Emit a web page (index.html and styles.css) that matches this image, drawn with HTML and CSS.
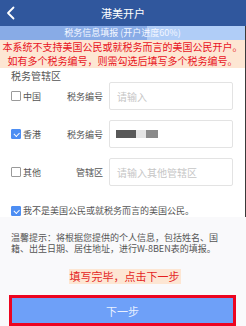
FILE: index.html
```html
<!DOCTYPE html>
<html lang="zh">
<head>
<meta charset="utf-8">
<link rel="stylesheet" href="styles.css">
</head>
<body>
<header class="topbar">
  <svg class="back" width="10" height="14" viewBox="0 0 10 14"><polyline points="7.5,1.5 2,7 7.5,12.5" fill="none" stroke="#fff" stroke-width="1.8" stroke-linecap="round" stroke-linejoin="round"/></svg>
  <h1 class="title">港美开户</h1>
</header>
<div class="edge">
  <div class="progress">
    <div class="progress-fill" style="width:60%"></div>
    <span class="progress-text">税务信息填报 (开户进度60%)</span>
  </div>
  <div class="warning">
    <div class="warn-line">本系统不支持美国公民或就税务而言的美国公民开户。</div>
    <div class="warn-line">如有多个税务编号，则需勾选后填写多个税务编号。</div>
  </div>
  <section class="form">
    <div class="section-title">税务管辖区</div>
    <div class="rows">
      <div class="row">
        <label class="opt"><span class="cb"></span>中国</label>
        <span class="lbl">税务编号</span>
        <div class="input"><span class="ph">请输入</span></div>
      </div>
      <div class="row">
        <label class="opt"><span class="cb checked"></span>香港</label>
        <span class="lbl">税务编号</span>
        <div class="input"><span class="masked"><i class="m1"></i><i class="m2"></i><i class="m3"></i></span></div>
      </div>
      <div class="row">
        <label class="opt"><span class="cb"></span>其他</label>
        <span class="lbl">管辖区</span>
        <div class="input"><span class="ph">请输入其他管辖区</span></div>
      </div>
    </div>
    <label class="agree"><span class="cb checked"></span>我不是美国公民或就税务而言的美国公民。</label>
  </section>
</div>
<section class="bottom">
  <p class="tip">温馨提示：将根据您提供的个人信息，包括姓名、国籍、出生日期、居住地址，进行W-8BEN表的填报。</p>
  <div class="hint-wrap"><span class="hint">填写完毕，点击下一步</span></div>
  <button class="next">下一步</button>
</section>
</body>
</html>
```
FILE: styles.css
```css
* { box-sizing: border-box; }
html, body { margin: 0; padding: 0; }
body {
  width: 246px;
  height: 326px;
  overflow: hidden;
  background: #fff;
  font-family: "Noto Sans CJK SC", "Noto Sans", sans-serif;
  color: #555;
}
.topbar {
  height: 26px;
  background: #30579d;
  display: flex;
  align-items: center;
  justify-content: center;
  position: relative;
}
.back { position: absolute; left: 6px; top: 6px; }
.title {
  margin: 0;
  font-size: 11px;
  font-weight: 400;
  color: #fff;
  line-height: 26px;
}
.edge { border-right: 1px solid #3a3a3a; }
.progress {
  position: relative;
  height: 14px;
  background: #b0cdf7;
  display: flex;
  justify-content: center;
  align-items: center;
}
.progress-fill {
  position: absolute;
  left: 0; top: 0; bottom: 0;
  background: #88abe6;
}
.progress-text {
  position: relative;
  font-size: 9px;
  line-height: 14px;
  color: #f4f7ff;
}
.warning {
  background: #fde6d3;
  color: #e8141e;
  font-size: 10px;
  text-align: center;
  padding: 0;
  white-space: nowrap;
}
.warn-line { height: 14px; line-height: 14px; overflow: hidden; }
.form { padding: 2px 12px 0 11px; }
.section-title {
  font-size: 10px;
  line-height: 12px;
  color: #555;
}
.rows { display: flex; flex-direction: column; gap: 10px; }
.row { display: flex; align-items: center; height: 28px; }
.opt {
  width: 50px;
  display: flex;
  align-items: center;
  font-size: 9px;
  color: #555;
}
.cb {
  width: 10px;
  height: 10px;
  border: 1px solid #9a9a9a;
  border-radius: 1px;
  margin-right: 2px;
  position: relative;
  flex: none;
}
.cb.checked { background: #4d8ef3; border-color: #4d8ef3; }
.cb.checked::after {
  content: "";
  position: absolute;
  left: 2px;
  top: 2px;
  width: 4px; height: 2.5px;
  border-left: 1.2px solid #fff;
  border-bottom: 1.2px solid #fff;
  transform: rotate(-45deg);
  transform-origin: center;
}
.lbl {
  flex: 1;
  text-align: right;
  padding-right: 6px;
  font-size: 9px;
  color: #555;
}
.input {
  width: 124px;
  height: 28px;
  border: 1px solid #e3e3e3;
  border-radius: 2px;
  padding-left: 7px;
  display: flex;
  align-items: center;
}
.ph { font-size: 10px; color: #c6c6c6; }
.masked { display: flex; align-items: center; filter: blur(0.6px); margin-left: -1px; }
.masked i { display: block; height: 8px; }
.m1 { width: 20px; background: #585858; }
.m2 { width: 10px; background: #e4e4e4; }
.m3 { width: 12px; background: #8a8a8a; }
.agree {
  display: flex;
  align-items: center;
  margin-top: 18px;
  height: 13px;
  font-size: 9px;
  color: #555;
}
.bottom {
  background: #f9f9fb;
  padding: 15px 0 0;
  height: 110px;
}
.tip {
  margin: 0 0 0 11px;
  width: 212px;
  font-size: 9px;
  line-height: 11px;
  color: #555;
}
.hint-wrap { text-align: center; margin-top: 8px; padding-left: 3px; }
.hint {
  display: inline-block;
  background: #fde6d3;
  color: #e41f1f;
  font-size: 11px;
  line-height: 15px;
  padding: 0 1px;
}
.next {
  display: block;
  margin: 9px 10px 0 9px;
  width: 227px;
  height: 31px;
  border: 3px solid #ec0520;
  background: #6ea0f8;
  color: #eaf1ff;
  font-family: inherit;
  font-size: 11px;
  padding: 0;
}
```
